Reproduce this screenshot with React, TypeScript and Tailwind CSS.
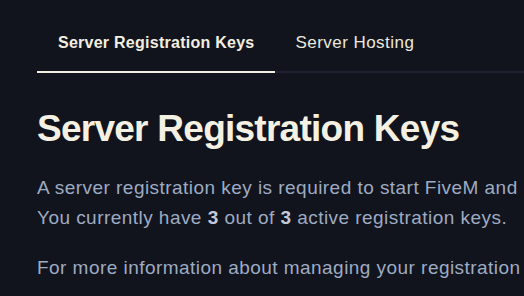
import React from 'react'

const tabs = [
  { label: 'Server Registration Keys', active: true },
  { label: 'Server Hosting', active: false },
]

const App = () => {
  return (
    <div className="min-h-screen w-full overflow-hidden bg-[#11141d] font-['Liberation_Sans',Arial,sans-serif]">
      <div className="w-[1000px] pl-[37px] pt-[15px]">
        <nav className="flex border-b-2 border-[#1f2131]">
          {tabs.map((tab) =>
            tab.active ? (
              <div
                key={tab.label}
                className="-mb-[2px] border-b-2 border-[#f3efe0] px-[21px] py-4 text-base leading-6 font-bold tracking-[0.016em] text-[#f3efe0]"
              >
                {tab.label}
              </div>
            ) : (
              <div key={tab.label} className="px-5 py-4 text-[17px] leading-6 tracking-[0.027em] text-[#ebe8de]">
                {tab.label}
              </div>
            )
          )}
        </nav>

        <h1 className="mt-9 text-[37px] leading-10 font-bold tracking-[-0.02em] text-[#f4f1e2]">
          Server Registration Keys
        </h1>

        <p className="mt-6 whitespace-nowrap text-[19px] leading-[30px] tracking-[0.024em] text-[#9eabc2]">
          A server registration key is required to start FiveM and RedM servers. Each key is tied to your account.
          <br />
          You currently have <span className="font-bold text-[#c3cbdb]">3</span> out of{' '}
          <span className="font-bold text-[#c3cbdb]">3</span> active registration keys.
        </p>

        <p className="mt-5 whitespace-nowrap text-[19px] leading-[30px] tracking-[0.024em] text-[#9eabc2]">
          For more information about managing your registration keys, see the documentation.
        </p>
      </div>
    </div>
  )
}

export default App
